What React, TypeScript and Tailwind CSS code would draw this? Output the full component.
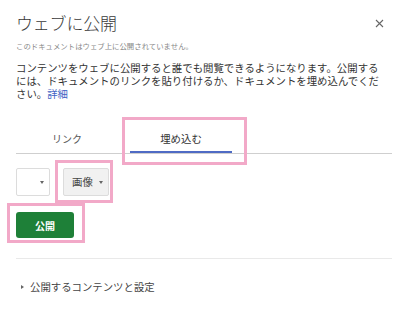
import React from "react";

function Caret({ color = "#666" }: { color?: string }) {
  return (
    <span
      className="inline-block w-0 h-0 border-l-[2.5px] border-r-[2.5px] border-t-[3px] border-l-transparent border-r-transparent"
      style={{ borderTopColor: color }}
    />
  );
}

export default function App() {
  return (
    <div
      className="relative w-[400px] h-[309px] overflow-hidden bg-white text-[#333]"
      style={{ fontFamily: '"Noto Sans CJK JP", "Noto Sans", sans-serif' }}
    >
      {/* Header */}
      <div className="flex items-center justify-between pl-4 pr-[16px] pt-[11px]">
        <div className="text-[17px] leading-[24px] text-[#3a3a3a] font-light tracking-[-0.2px]">ウェブに公開</div>
        <svg width="9" height="9" viewBox="0 0 9 9">
          <path d="M1 1L8 8M8 1L1 8" stroke="#666" strokeWidth="1.1" />
        </svg>
      </div>

      {/* Subtitle */}
      <div className="mt-[6px] px-4 text-[7.4px] leading-[10px] text-[#888]">
        このドキュメントはウェブ上に公開されていません。
      </div>

      {/* Body */}
      <div className="mt-[10px] pl-4 pr-[14px] text-[10.4px] leading-[13px] text-[#333]">
        コンテンツをウェブに公開すると誰でも閲覧できるようになります。公開するには、ドキュメントのリンクを貼り付けるか、ドキュメントを埋め込んでください。<span className="inline-block align-top leading-[13px] text-[#3f63c4]">詳細</span>
      </div>

      {/* Tabs */}
      <div className="mt-[26px] ml-4 mr-2 flex gap-[12px] border-b border-[#cfcfcf]">
        <div className="w-[102px] h-[27px] flex items-center justify-center border-b-2 border-transparent text-[10px] text-[#555]">
          リンク
        </div>
        <div className="w-[102px] h-[27px] flex items-center justify-center border-b-2 border-[#4f6bc4] text-[10.4px] text-[#333]">
          埋め込む
        </div>
      </div>

      {/* Dropdowns */}
      <div className="mt-[14px] ml-4 flex">
        <div className="w-[34px] h-[28px] flex items-center justify-end pr-[5px] border border-[#dcdcdc] rounded-[2px] bg-white">
          <Caret />
        </div>
        <div className="ml-[13px] w-[46px] h-[28px] flex items-center pl-[8px] gap-[6px] border border-[#dcdcdc] rounded-[2px] bg-[#f1f1f1]">
          <span className="text-[10.4px] leading-none text-[#444]">画像</span>
          <Caret />
        </div>
      </div>

      {/* Publish button */}
      <div className="mt-[16px] ml-4">
        <div className="w-[58px] h-[26px] flex items-center justify-center rounded-[3px] bg-[#1e8038] text-white text-[10px] font-bold">
          公開
        </div>
      </div>

      {/* Separator */}
      <div className="mt-[20px] ml-4 mr-2 h-px bg-[#e9e9e9]" />

      {/* Footer */}
      <div className="mt-[21px] ml-[21px] flex items-center gap-[6px]">
        <span className="inline-block w-0 h-0 border-t-[2.5px] border-b-[2.5px] border-l-[3px] border-t-transparent border-b-transparent border-l-[#666]" />
        <span className="text-[10.4px] leading-[14px] text-[#444]">公開するコンテンツと設定</span>
      </div>

      {/* Annotation highlight boxes */}
      <div className="absolute left-[122px] top-[117px] w-[125px] h-[48px] border-[3px] border-[#f2a9c8] pointer-events-none" />
      <div className="absolute left-[55px] top-[160px] w-[58px] h-[43px] border-[3px] border-[#f2a9c8] pointer-events-none" />
      <div className="absolute left-[7px] top-[203px] w-[78px] h-[40px] border-[3px] border-[#f2a9c8] pointer-events-none" />
    </div>
  );
}
